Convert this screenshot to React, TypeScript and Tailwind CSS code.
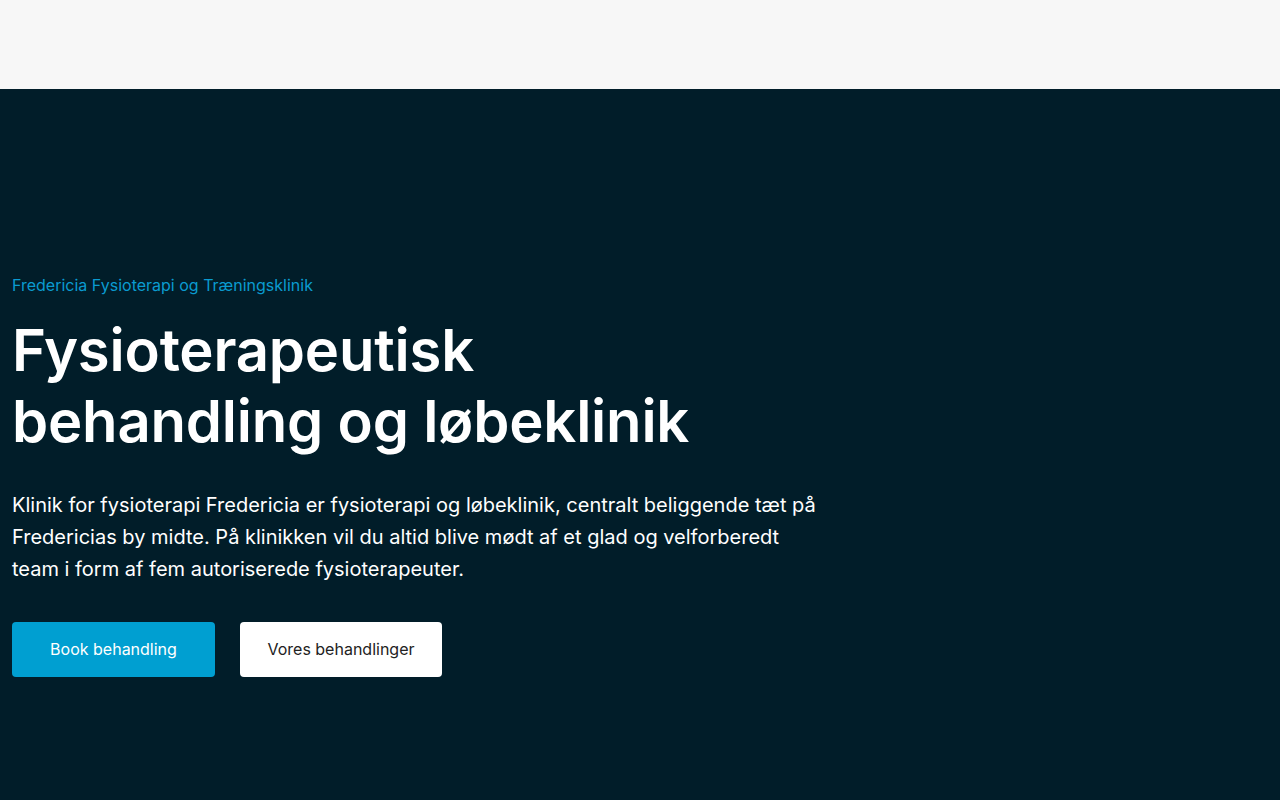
export default function App() {
  return (
    <div className="min-h-[800px] bg-[#011d29] font-['Inter','Liberation_Sans',sans-serif]">
      <header className="h-[89px] bg-[#f7f7f7]"></header>
      <section className="px-3 pt-[184px] pb-[123px]">
        <p className="text-base leading-6 text-[#0a9bd0]">
          Fredericia Fysioterapi og Træningsklinik
        </p>
        <h1 className="mt-[18px] text-[58px] leading-[71px] font-semibold text-white tracking-[-0.2px]">
          Fysioterapeutisk
          <br />
          behandling og løbeklinik
        </h1>
        <p className="mt-8 max-w-[808px] text-xl leading-8 text-white">
          Klinik for fysioterapi Fredericia er fysioterapi og løbeklinik, centralt beliggende tæt på
          Fredericias by midte. På klinikken vil du altid blive mødt af et glad og velforberedt team
          i form af fem autoriserede fysioterapeuter.
        </p>
        <div className="mt-[37px] flex gap-[25px]">
          <button className="flex h-[55px] w-[203px] items-center justify-center rounded bg-[#009fd1] pb-px text-base text-white">
            Book behandling
          </button>
          <button className="flex h-[55px] w-[202px] items-center justify-center rounded bg-white pb-px text-base text-[#222222]">
            Vores behandlinger
          </button>
        </div>
      </section>
    </div>
  );
}
